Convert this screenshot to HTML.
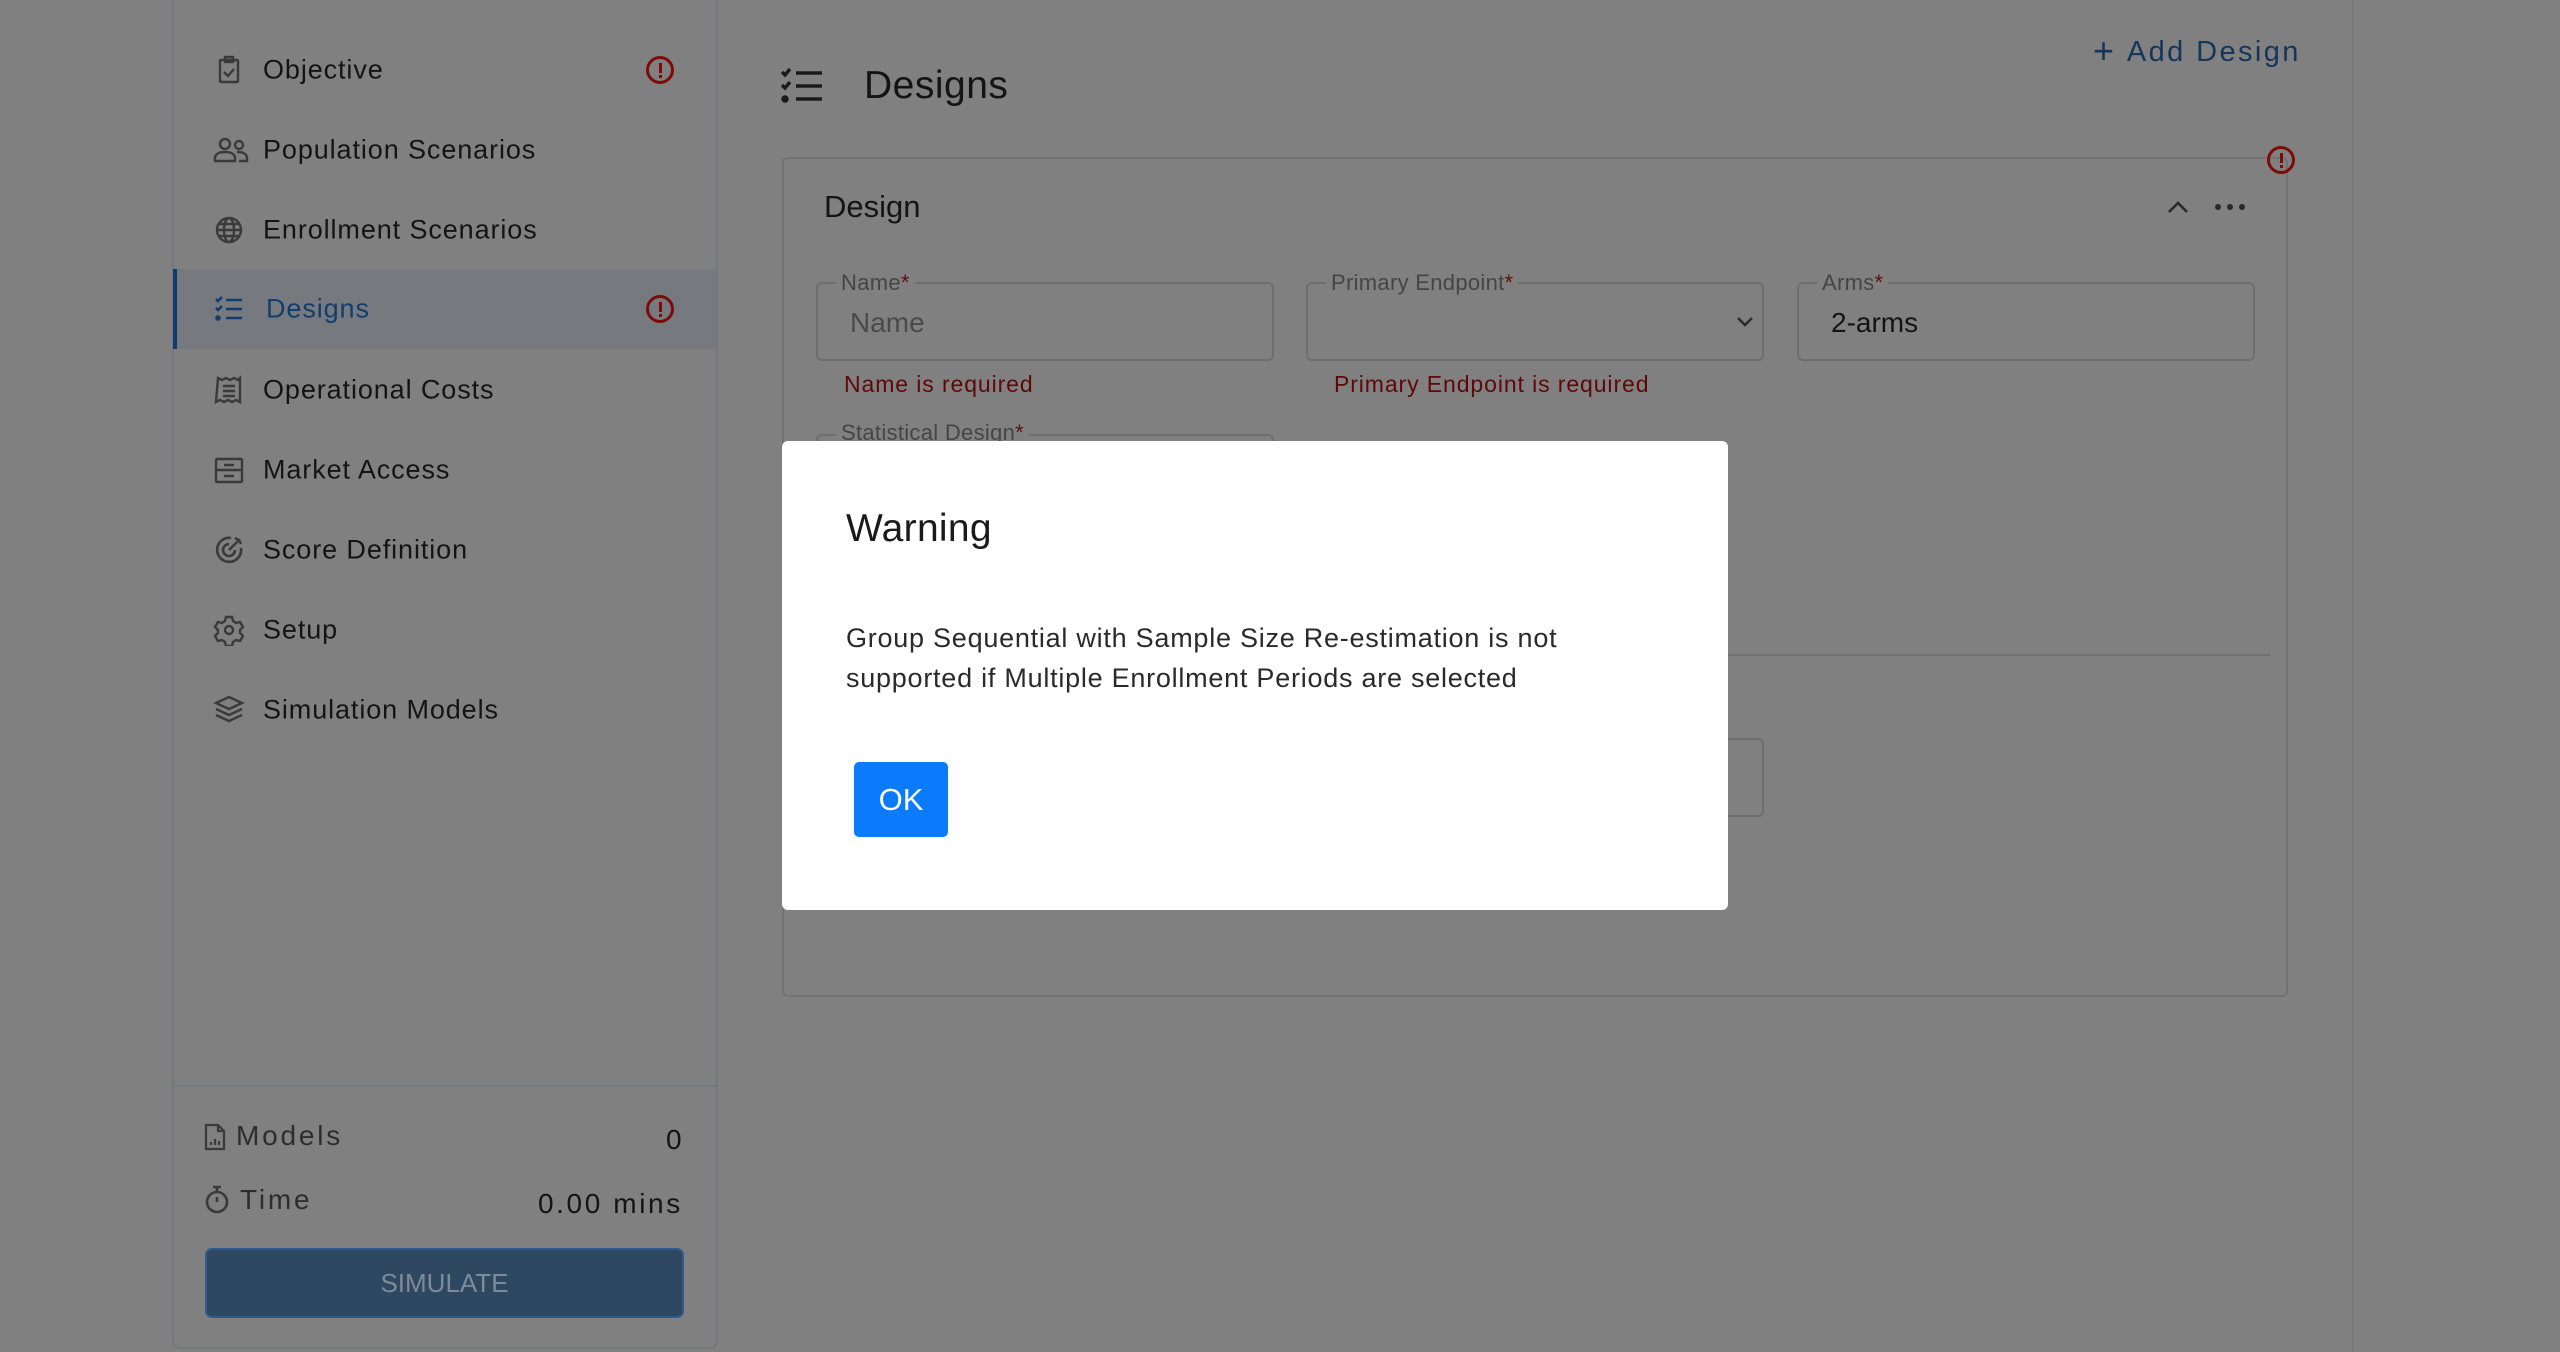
<!DOCTYPE html>
<html><head><meta charset="utf-8"><style>
*{box-sizing:border-box;margin:0;padding:0}
body{width:2560px;height:1352px;background:#808080;font-family:"Liberation Sans",Arial,sans-serif;position:relative;overflow:hidden;color:#1a1a1a}
.abs{position:absolute}
.side{left:172px;top:-10px;width:546px;height:1359px;border:2px solid #727880;border-top:none;border-radius:0 0 8px 8px}
.nav{position:absolute;left:173px;width:543px;height:80px}
.nav .t{position:absolute;left:90px;top:50%;transform:translateY(-50%);font-size:27px;letter-spacing:0.9px;color:#141414}
.nav svg.i{position:absolute;left:40px;top:24px}
.err{position:absolute;left:473px;top:26px;width:28px;height:28px;border:3px solid #7e0a0a;border-radius:50%}
.err:after{content:"";position:absolute;left:9.5px;top:4px;width:3px;height:10px;background:#7e0a0a}
.err:before{content:"";position:absolute;left:9.5px;top:16px;width:3px;height:3px;background:#7e0a0a}
.fld{position:absolute;height:79px;border:2px solid #6e6e6e;border-radius:6px}
.lbl{position:absolute;top:-14px;left:18px;background:#808080;padding:0 5px;font-size:22px;color:#454545;letter-spacing:0.3px}
.lbl b{color:#5a1010;font-weight:normal}
.er{position:absolute;font-size:23px;color:#5e0808;letter-spacing:0.9px}
</style></head><body>
<div class="abs side"></div>
<div class="abs" style="left:2352px;top:0;width:2px;height:1352px;background:#757a80"></div>

<div class="nav" style="top:30px"><svg class="i" width="32" height="32" viewBox="0 0 32 32" fill="none" stroke="#3a3a3a" stroke-width="2.4"><rect x="7" y="6" width="18" height="22" rx="1"/><rect x="12" y="3" width="8" height="5"/><path d="M11 18l4 4 6-7"/></svg><div class="t">Objective</div><div class="err"></div></div>
<div class="nav" style="top:110px"><svg class="i" width="36" height="32" viewBox="0 0 36 32" fill="none" stroke="#3a3a3a" stroke-width="2.4"><circle cx="12" cy="10" r="5"/><path d="M2 27v-3c0-4 4-6 10-6s10 2 10 6v3z"/><circle cx="26" cy="11" r="4"/><path d="M24 18c6 0 10 2 10 6v3h-8"/></svg><div class="t">Population Scenarios</div></div>
<div class="nav" style="top:190px"><svg class="i" width="32" height="32" viewBox="0 0 32 32" fill="none" stroke="#3a3a3a" stroke-width="2.4"><circle cx="16" cy="16" r="12"/><ellipse cx="16" cy="16" rx="5" ry="12"/><path d="M4 16h24M6 10h20M6 22h20"/></svg><div class="t">Enrollment Scenarios</div></div>
<div class="nav" style="top:269px;background:#76797e"><div class="abs" style="left:0;top:0;width:4px;height:80px;background:#0e3c70"></div><svg class="i" width="32" height="32" viewBox="0 0 32 32" fill="none" stroke="#123e6e" stroke-width="2.6"><path d="M3 6l2 2 4-4M3 15l2 2 4-4"/><circle cx="5" cy="25" r="1.5" fill="#123e6e"/><path d="M13 7h16M13 16h16M13 25h16"/></svg><div class="t" style="left:93px;color:#123e6e">Designs</div><div class="err"></div></div>
<div class="nav" style="top:350px"><svg class="i" width="32" height="32" viewBox="0 0 32 32" fill="none" stroke="#3a3a3a" stroke-width="2.4"><path d="M5 4l4 2 4-2 4 2 4-2 4 2 2-2v24l-4-2-4 2-4-2-4 2-4-2-4 2z"/><path d="M10 12h12M10 17h12M10 22h12"/></svg><div class="t">Operational Costs</div></div>
<div class="nav" style="top:430px"><svg class="i" width="32" height="32" viewBox="0 0 32 32" fill="none" stroke="#3a3a3a" stroke-width="2.4"><rect x="3" y="5" width="26" height="23" rx="1"/><path d="M3 16h26M11 11h10M11 22h10"/></svg><div class="t">Market Access</div></div>
<div class="nav" style="top:510px"><svg class="i" width="32" height="32" viewBox="0 0 32 32" fill="none" stroke="#3a3a3a" stroke-width="2.6"><path d="M28 14a12 12 0 1 1-10-10"/><path d="M22 16a6 6 0 1 1-6-6"/><path d="M16 16l10-10M22 4l4 2 2 4"/></svg><div class="t">Score Definition</div></div>
<div class="nav" style="top:590px"><svg class="i" width="32" height="32" viewBox="0 0 32 32" fill="none" stroke="#3a3a3a" stroke-width="2.4"><path d="M13 3h6l1 4 3 2 4-1 3 5-3 3v3l3 3-3 5-4-1-3 2-1 4h-6l-1-4-3-2-4 1-3-5 3-3v-3l-3-3 3-5 4 1 3-2z"/><circle cx="16" cy="16" r="4"/></svg><div class="t">Setup</div></div>
<div class="nav" style="top:670px"><svg class="i" width="32" height="32" viewBox="0 0 32 32" fill="none" stroke="#3a3a3a" stroke-width="2.4"><path d="M16 3l13 6-13 6-13-6z"/><path d="M3 15l13 6 13-6M3 21l13 6 13-6"/></svg><div class="t">Simulation Models</div></div>

<div class="abs" style="left:173px;top:1085px;width:544px;height:2px;background:#727880"></div>
<svg class="abs" style="left:204px;top:1123px" width="22" height="28" viewBox="0 0 22 28" fill="none" stroke="#3a3a3a" stroke-width="2.2"><path d="M2 2h12l6 6v18H2z"/><path d="M14 2v6h6"/><path d="M7 22v-3M11 22v-6M15 22v-4"/></svg>
<div class="abs" style="left:236px;top:1120px;font-size:28px;letter-spacing:2.8px;color:#2d2d2d">Models</div>
<div class="abs" style="left:666px;top:1124px;font-size:28px;color:#141414">0</div>
<svg class="abs" style="left:204px;top:1184px" width="26" height="30" viewBox="0 0 26 30" fill="none" stroke="#3a3a3a" stroke-width="2.6"><circle cx="13" cy="18" r="10"/><path d="M9 3h8M13 3v5M13 18v-5"/></svg>
<div class="abs" style="left:240px;top:1184px;font-size:28px;letter-spacing:2.8px;color:#2d2d2d">Time</div>
<div class="abs" style="left:538px;top:1188px;font-size:28px;letter-spacing:2.6px;color:#141414">0.00 mins</div>
<div class="abs" style="left:205px;top:1248px;width:479px;height:70px;background:#2e4862;border:2px solid #2f5a8a;border-radius:7px;text-align:center;line-height:66px;font-size:26px;color:#7e8a96">SIMULATE</div>

<svg class="abs" style="left:780px;top:66px" width="44" height="40" viewBox="0 0 44 40" fill="none" stroke="#1a1a1a" stroke-width="3.4"><path d="M2 6l3 3 5-6M2 19l3 3 5-6"/><circle cx="5" cy="33" r="2" fill="#1a1a1a"/><path d="M16 7h26M16 20h26M16 33h26"/></svg>
<div class="abs" style="left:864px;top:64px;font-size:39px;letter-spacing:0.5px;color:#141414">Designs</div>
<div class="abs" style="left:2093px;top:28px;font-size:29px;letter-spacing:2.4px;color:#16355a"><span style="font-size:36px;position:relative;top:2px">+</span>&nbsp;Add Design</div>

<div class="abs" style="left:782px;top:157px;width:1506px;height:840px;border:2px solid #727272;border-radius:6px"></div>
<div class="err" style="left:2267px;top:146px"></div>
<div class="abs" style="left:824px;top:189px;font-size:31px;color:#141414">Design</div>
<svg class="abs" style="left:2166px;top:199px" width="24" height="16" viewBox="0 0 24 16" fill="none" stroke="#2a2a2a" stroke-width="2.6"><path d="M3 13l9-9 9 9"/></svg>
<svg class="abs" style="left:2214px;top:202px" width="32" height="10"><circle cx="4" cy="5" r="3" fill="#2a2a2a"/><circle cx="16" cy="5" r="3" fill="#2a2a2a"/><circle cx="28" cy="5" r="3" fill="#2a2a2a"/></svg>

<div class="fld" style="left:816px;top:282px;width:458px"><div class="lbl">Name<b>*</b></div><div class="abs" style="left:32px;top:23px;font-size:28px;color:#4a4a4a">Name</div></div>
<div class="fld" style="left:1306px;top:282px;width:458px"><div class="lbl">Primary Endpoint<b>*</b></div><svg class="abs" style="left:428px;top:32px" width="18" height="12" viewBox="0 0 18 12" fill="none" stroke="#2a2a2a" stroke-width="2.4"><path d="M2 2l7 7 7-7"/></svg></div>
<div class="fld" style="left:1797px;top:282px;width:458px"><div class="lbl">Arms<b>*</b></div><div class="abs" style="left:32px;top:23px;font-size:28px;color:#141414">2-arms</div></div>
<div class="er" style="left:844px;top:371px">Name is required</div>
<div class="er" style="left:1334px;top:371px">Primary Endpoint is required</div>
<div class="fld" style="left:816px;top:434px;width:458px;height:60px;border-bottom:none"><div class="lbl" style="top:-16px">Statistical Design<b>*</b></div></div>
<div class="abs" style="left:816px;top:654px;width:1454px;height:2px;background:#707070"></div>
<div class="fld" style="left:1306px;top:738px;width:458px"></div>

<div class="abs" style="left:782px;top:441px;width:946px;height:469px;background:#fff;border-radius:6px">
<div class="abs" style="left:64px;top:66px;font-size:39px;letter-spacing:0.3px;color:#1a1a1a">Warning</div>
<div class="abs" style="left:64px;top:177px;font-size:27px;line-height:40px;color:#2a2a2a;letter-spacing:0.75px">Group Sequential with Sample Size Re-estimation is not<br>supported if Multiple Enrollment Periods are selected</div>
<div class="abs" style="left:72px;top:321px;width:94px;height:75px;background:#0a7bfd;border-radius:5px;color:#fff;font-size:31px;text-align:center;line-height:75px">OK</div>
</div>
</body></html>
